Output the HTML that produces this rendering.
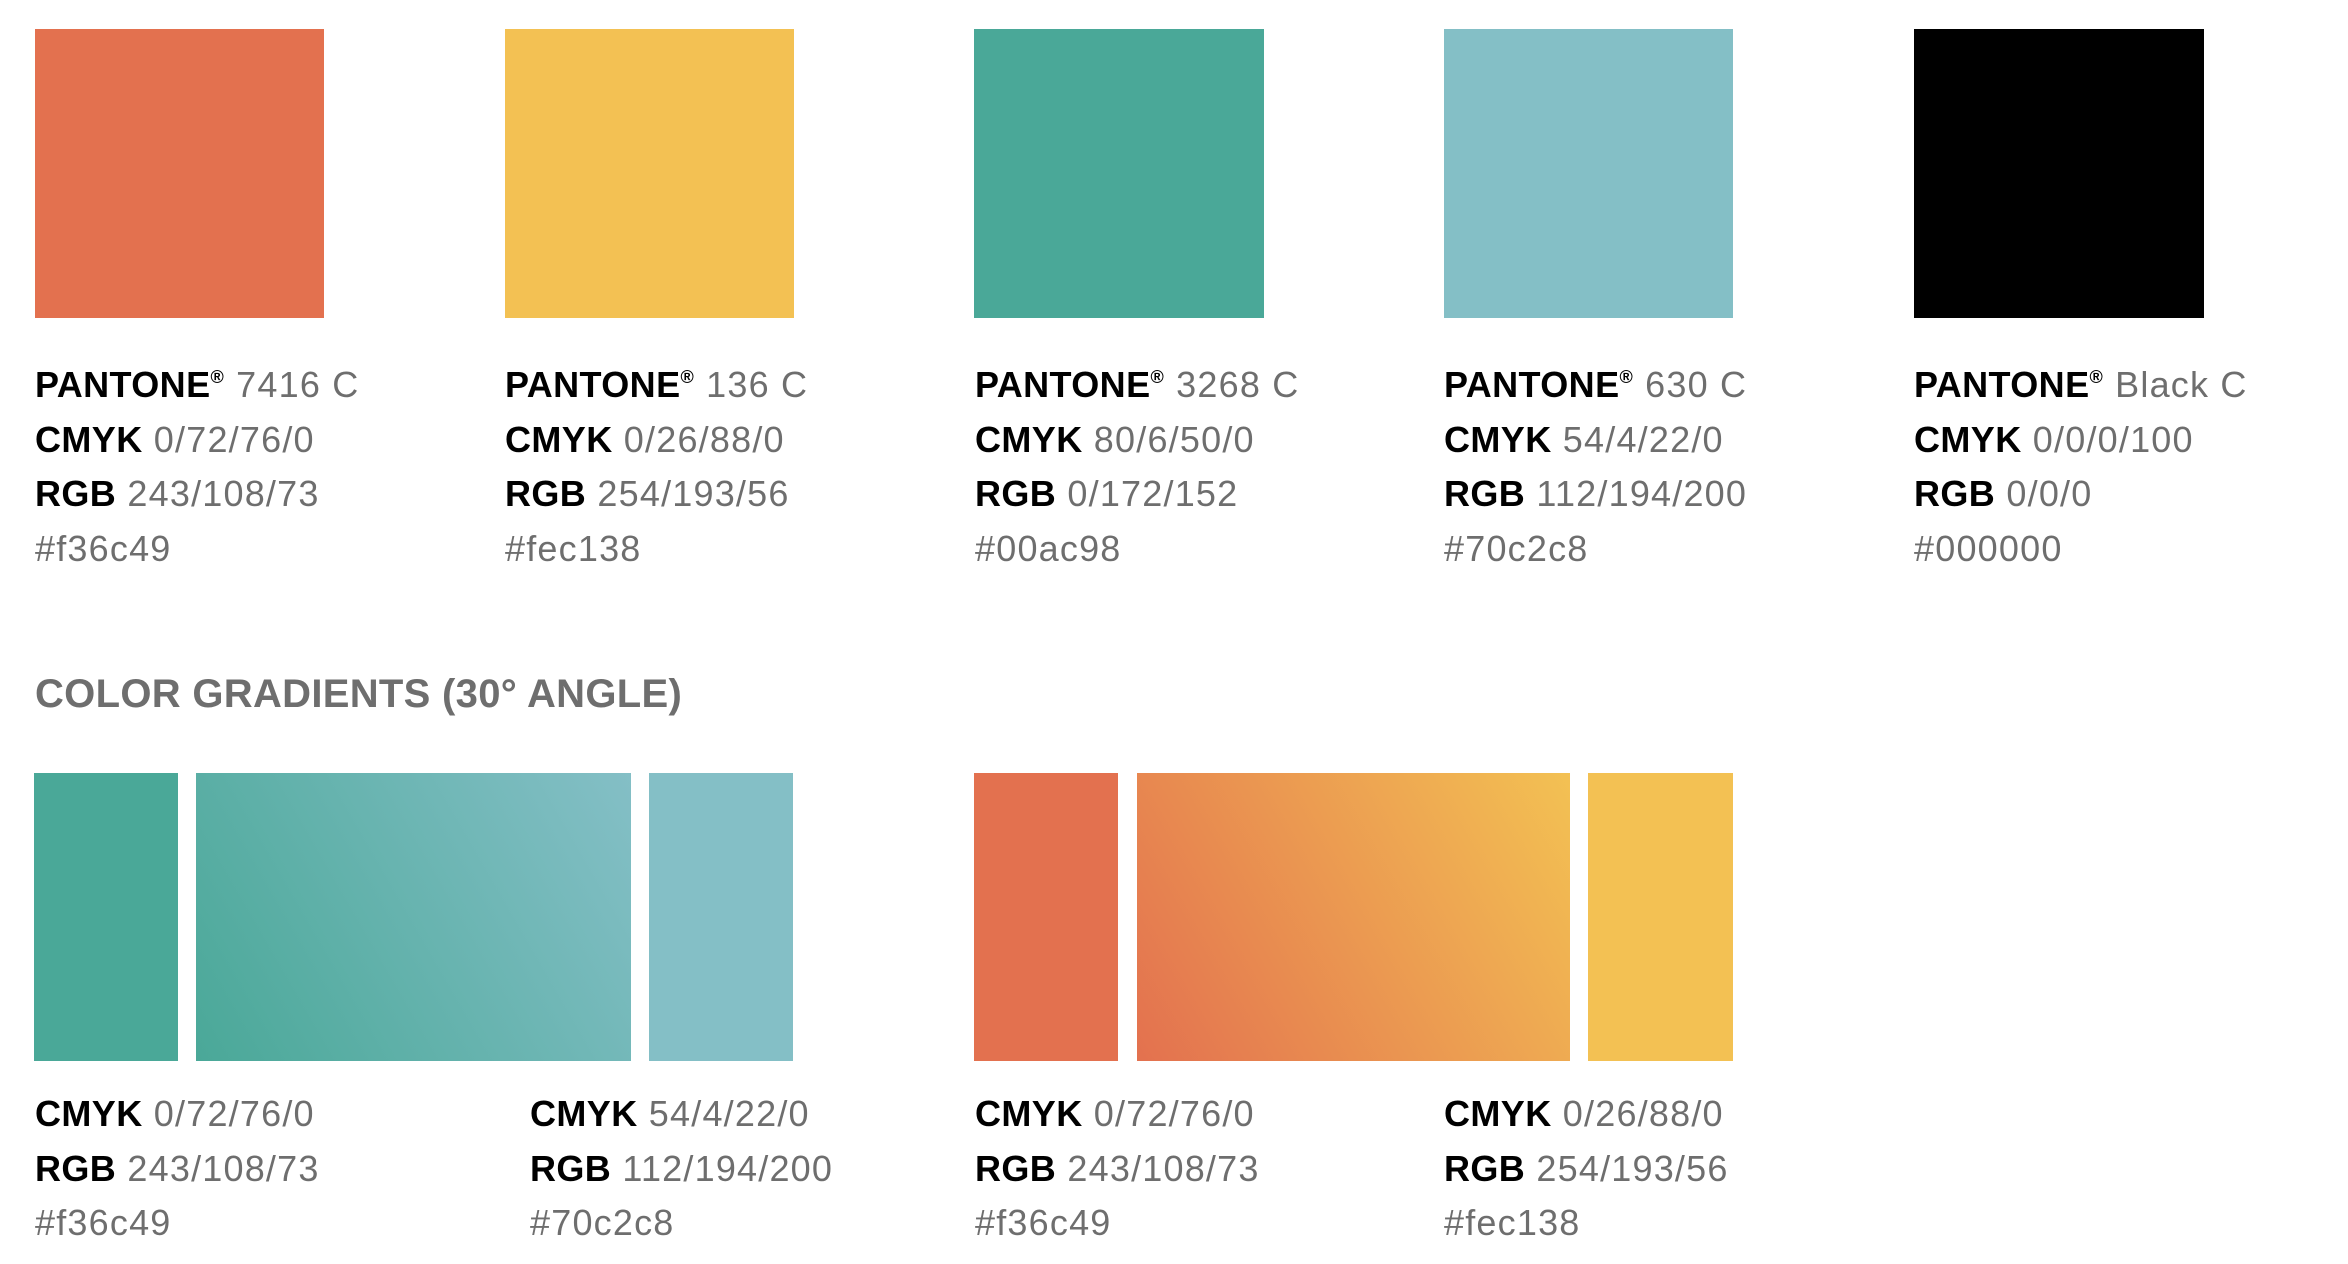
<!DOCTYPE html>
<html><head><meta charset="utf-8"><style>
body{margin:0;width:2348px;height:1264px;background:#fff;position:relative;overflow:hidden;font-family:"Liberation Sans",sans-serif}
.b{position:absolute}
.t{position:absolute;font-size:36px;line-height:54.6px;color:#6e6e6e;white-space:nowrap;letter-spacing:1.2px}
.t b{color:#000;letter-spacing:0.4px}
.t sup{font-size:18px;vertical-align:14px;line-height:0;color:#000;font-weight:bold}
h2{position:absolute;left:35px;top:672px;margin:0;font-size:40px;color:#6e6e6e;font-weight:bold;letter-spacing:0.3px}
</style></head><body>
<div class="b" style="left:35px;top:29px;width:289px;height:289px;background:#e3714f"></div>
<div class="b" style="left:505px;top:29px;width:289px;height:289px;background:#f3c153"></div>
<div class="b" style="left:974px;top:29px;width:290px;height:289px;background:#4aa898"></div>
<div class="b" style="left:1444px;top:29px;width:289px;height:289px;background:#84bfc6"></div>
<div class="b" style="left:1914px;top:29px;width:290px;height:289px;background:#000"></div>

<div class="t" style="left:35px;top:358px"><b>PANTONE</b><sup>®</sup> 7416 C<br><b>CMYK</b> 0/72/76/0<br><b>RGB</b> 243/108/73<br>#f36c49</div>
<div class="t" style="left:505px;top:358px"><b>PANTONE</b><sup>®</sup> 136 C<br><b>CMYK</b> 0/26/88/0<br><b>RGB</b> 254/193/56<br>#fec138</div>
<div class="t" style="left:975px;top:358px"><b>PANTONE</b><sup>®</sup> 3268 C<br><b>CMYK</b> 80/6/50/0<br><b>RGB</b> 0/172/152<br>#00ac98</div>
<div class="t" style="left:1444px;top:358px"><b>PANTONE</b><sup>®</sup> 630 C<br><b>CMYK</b> 54/4/22/0<br><b>RGB</b> 112/194/200<br>#70c2c8</div>
<div class="t" style="left:1914px;top:358px"><b>PANTONE</b><sup>®</sup> Black C<br><b>CMYK</b> 0/0/0/100<br><b>RGB</b> 0/0/0<br>#000000</div>

<h2>COLOR GRADIENTS (30° ANGLE)</h2>

<div class="b" style="left:34px;top:773px;width:144px;height:288px;background:#4aa898"></div>
<div class="b" style="left:196px;top:773px;width:435px;height:288px;background:linear-gradient(60deg,#4aa898,#84bfc6)"></div>
<div class="b" style="left:649px;top:773px;width:144px;height:288px;background:#84bfc6"></div>
<div class="b" style="left:974px;top:773px;width:144px;height:288px;background:#e3714f"></div>
<div class="b" style="left:1137px;top:773px;width:433px;height:288px;background:linear-gradient(60deg,#e3714f,#f3c153)"></div>
<div class="b" style="left:1588px;top:773px;width:145px;height:288px;background:#f3c153"></div>

<div class="t" style="left:35px;top:1087px"><b>CMYK</b> 0/72/76/0<br><b>RGB</b> 243/108/73<br>#f36c49</div>
<div class="t" style="left:530px;top:1087px"><b>CMYK</b> 54/4/22/0<br><b>RGB</b> 112/194/200<br>#70c2c8</div>
<div class="t" style="left:975px;top:1087px"><b>CMYK</b> 0/72/76/0<br><b>RGB</b> 243/108/73<br>#f36c49</div>
<div class="t" style="left:1444px;top:1087px"><b>CMYK</b> 0/26/88/0<br><b>RGB</b> 254/193/56<br>#fec138</div>
</body></html>
